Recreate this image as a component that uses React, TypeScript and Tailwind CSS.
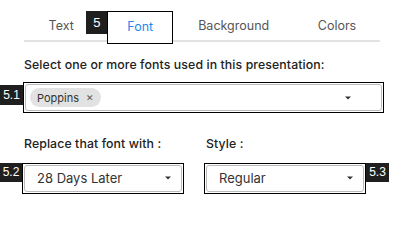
function Badge({ label, className = "" }: { label: string; className?: string }) {
  return (
    <div
      className={`flex items-center justify-center bg-[#1f1f1f] text-white text-[12px] leading-none font-['Liberation_Sans',sans-serif] ${className}`}
    >
      {label}
    </div>
  );
}

function Caret() {
  return (
    <svg width="6" height="4" viewBox="0 0 6 4" className="shrink-0">
      <path d="M0 0.5 H6 L3 3.5 Z" fill="#333" />
    </svg>
  );
}

export default function App() {
  return (
    <div className="w-[404px] h-[240px] bg-white font-['Inter',sans-serif] text-[#222] relative">
      {/* tabs */}
      <div className="pt-[11px] px-[24px]">
        <div className="flex items-start h-[31px] border-b-2 border-[#e2e2e2] text-[12.5px] text-[#555]">
          <div className="w-[63px] h-[31px] flex items-center justify-center pl-[12px]">Text</div>
          <Badge label="5" className="w-[21px] h-[23px] text-[13px]" />
          <div className="w-[67px] h-[33px] border border-black bg-white flex items-center justify-center text-[#1e88f0]">
            Font
          </div>
          <div className="w-[122px] h-[31px] flex items-center justify-center">Background</div>
          <div className="w-[87px] h-[31px] flex items-center justify-center">Colors</div>
        </div>
      </div>

      {/* multi select */}
      <div className="px-[24px] mt-[14px] text-[12.3px] font-medium tracking-[0.1px]">
        Select one or more fonts used in this presentation:
      </div>
      <div className="flex items-start mt-[8px]">
        <Badge label="5.1" className="w-[23px] h-[20px] mt-[3px]" />
        <div className="w-[361px] h-[31px] border border-black p-px">
          <div className="h-full rounded-[3px] border border-[#bbb] flex items-center pl-[4px] pr-[30px]">
            <div className="flex items-center gap-[7px] h-[19px] rounded-full bg-[#e2e2e2] px-[7px] text-[11px] text-[#333]">
              Poppins
              <span className="text-[9px] text-[#555]">✕</span>
            </div>
            <div className="flex-1" />
            <Caret />
          </div>
        </div>
      </div>

      {/* replacement */}
      <div className="flex mt-[22px] text-[12.3px] font-medium tracking-[0.1px]">
        <div className="pl-[24px] w-[206px]">Replace that font with :</div>
        <div>Style :</div>
      </div>
      <div className="flex items-start mt-[9px]">
        <Badge label="5.2" className="w-[22px] h-[19px]" />
        <div className="w-[162px] h-[31px] border border-black p-px">
          <div className="h-full rounded-[3px] border border-[#bbb] flex items-center pl-[12px] pr-[10px] text-[13px] text-[#333]">
            <span className="flex-1">28 Days Later</span>
            <Caret />
          </div>
        </div>
        <div className="w-[20px]" />
        <div className="w-[162px] h-[31px] border border-black p-px">
          <div className="h-full rounded-[3px] border border-[#bbb] flex items-center pl-[12px] pr-[10px] text-[13px] text-[#333]">
            <span className="flex-1">Regular</span>
            <Caret />
          </div>
        </div>
        <Badge label="5.3" className="w-[23px] h-[19px]" />
      </div>
    </div>
  );
}
